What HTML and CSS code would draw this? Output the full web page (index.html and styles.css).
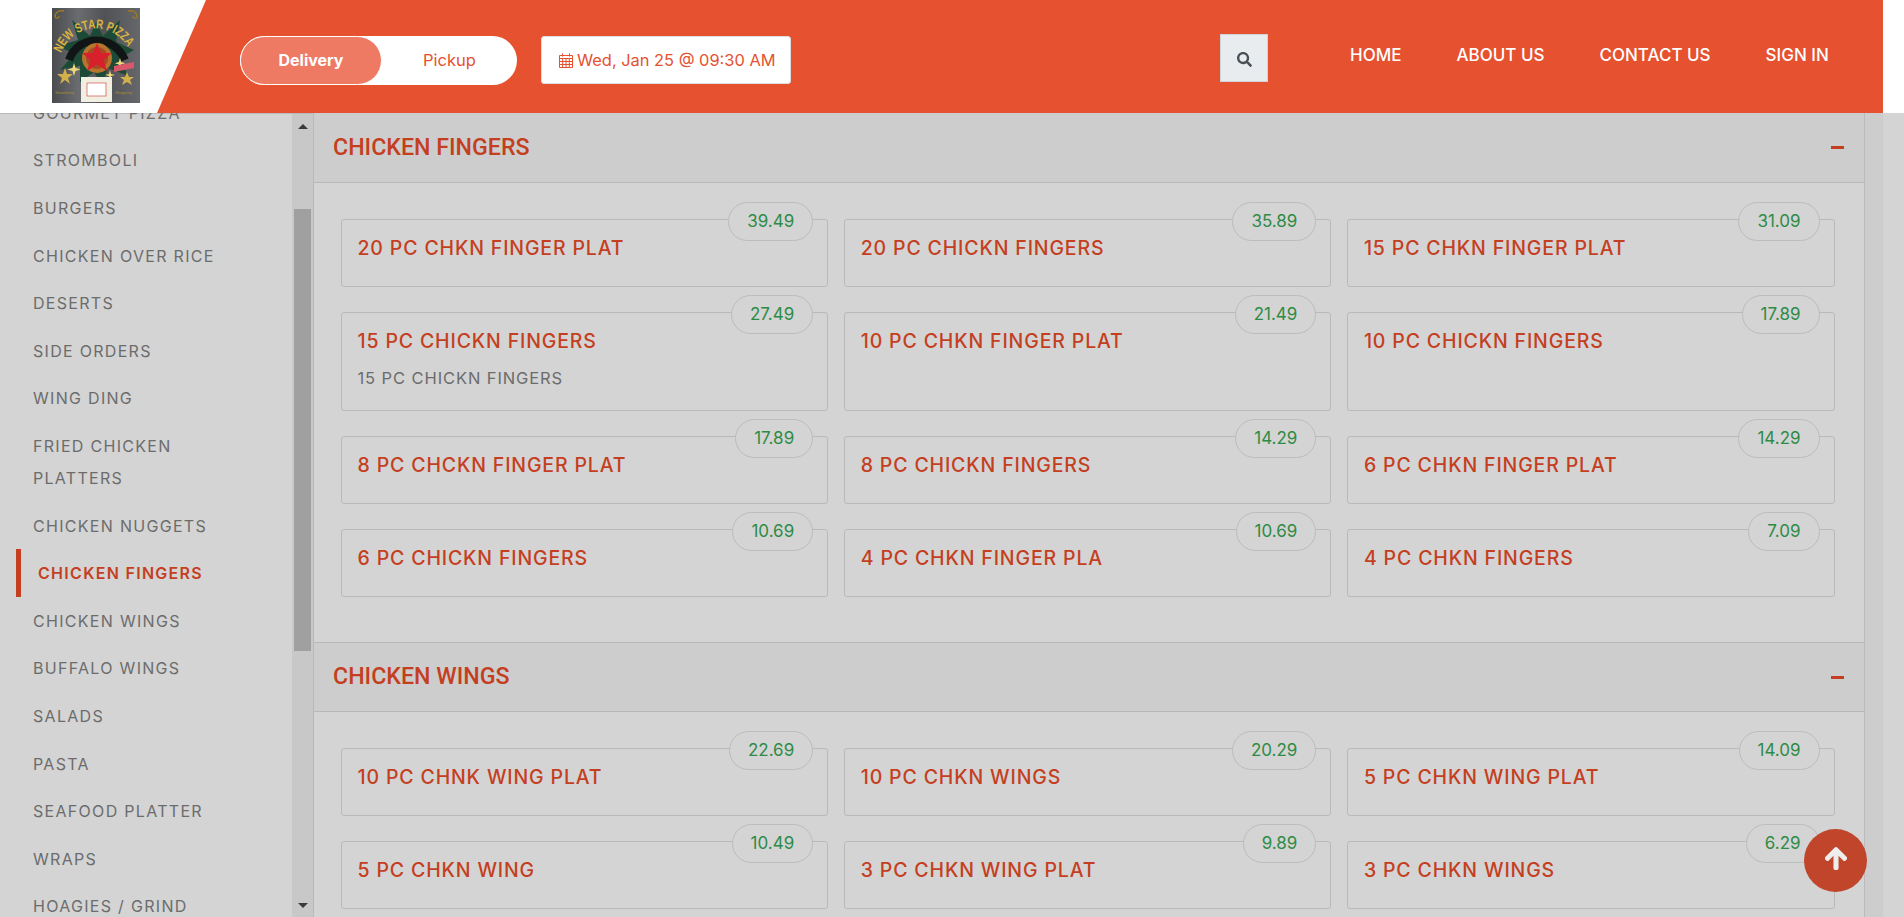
FILE: index.html
```html
<!DOCTYPE html>
<html lang="en">

<head>
  <meta charset="UTF-8">
  <title>New Star Pizza - Order Online</title>
  <link rel="stylesheet" href="styles.css">
</head>

<body>
  <header class="topbar">
    <div class="logo-box">
      <svg class="logo" viewBox="0 0 88 95">
        <defs>
          <path id="logoArc" d="M9 45 C22 12 66 12 80 47"></path>
          <linearGradient id="logoWood" x1="0" x2="1" y1="0" y2="0">
            <stop offset="0" stop-color="#4a4b4e"></stop>
            <stop offset=".3" stop-color="#6b6c70"></stop>
            <stop offset=".6" stop-color="#515256"></stop>
            <stop offset="1" stop-color="#66676b"></stop>
          </linearGradient>
        </defs>
        <rect width="88" height="95" fill="url(#logoWood)"></rect>
        <path d="M3 9c0-5 4-7 9-6M3 9c2 2 4 1 4-1M85 9c0-5-4-7-9-6M85 9c-2 2-4 1-4-1" stroke="#9c7a25" stroke-width="1.3" fill="none"></path>
        <polygon points="44,14 51,28 68,12 64,34 82,42 68,50 76,68 56,60 50,78 42,64 28,74 28,58 8,62 22,46 6,38 26,32 20,12 38,28" fill="#1d4a36"></polygon>
        <path d="M17 52 C26 26 62 26 73 52" stroke="#121516" stroke-width="8" fill="none"></path>
        <text class="logo-name"><textPath href="#logoArc" textLength="84" lengthAdjust="spacingAndGlyphs">NEW STAR PIZZA</textPath></text>
        <circle cx="45" cy="50" r="15" fill="#b8742c"></circle>
        <circle cx="45" cy="50" r="11" fill="#a94a26"></circle>
        <polygon points="45,35 49,45 60,45 51.500,52 55,63 45,56.500 35,63 38.500,52 30,45 41,45" fill="#d8202c"></polygon>
        <path d="M22 55l1.500 5 5 1.500-5 1.500-1.500 5-1.500-5-5-1.500 5-1.500zM68 50l1.200 4 4 1.200-4 1.200-1.200 4-1.200-4-4-1.200 4-1.200zM58 62l1 4 4 1-4 1-1 4-1-4-4-1 4-1z" fill="#f0d878"></path>
        <polygon points="13,60 15,66 21,66 16,70 18,76 13,72 8,76 10,70 5,66 11,66" fill="#d2b04c"></polygon>
        <polygon points="75,64 77,69 82,69 78,72 80,77 75,74 70,77 72,72 68,69 73,69" fill="#d2b04c"></polygon>
        <path d="M62 58l20-4v6l-20 4z" fill="#d8586a"></path>
        <rect x="29" y="69" width="31" height="25" fill="#f1eee2"></rect>
        <rect x="35" y="75" width="19" height="13" fill="#fff" stroke="#c33" stroke-width=".6"></rect>
        <text class="logo-small" x="3" y="86">Strawberry</text>
        <text class="logo-small" x="63" y="86">Shopping</text>
      </svg>
    </div>

    <div class="order-tools">
      <div class="mode-toggle">
        <span class="mode mode-active">Delivery</span>
        <span class="mode mode-pickup">Pickup</span>
      </div>
      <div class="date-box">
        <svg class="date-icon" viewBox="0 0 14 15">
          <path d="M3.500 0.500v3M10.500 0.500v3M0.500 2.500h13v12h-13zM0.500 5.500h13M0.500 8.500h13M0.500 11.500h13M3.700 5.500v9M7 5.500v9M10.300 5.500v9" fill="none" stroke="currentColor"></path>
        </svg>
        Wed, Jan 25 @ 09:30 AM
      </div>
    </div>

    <button class="search-btn" aria-label="Search">
      <svg viewBox="0 0 512 512">
        <path d="M505 442.7L405.3 343c-4.5-4.5-10.6-7-17-7H372c27.6-35.3 44-79.7 44-128C416 93.1 322.9 0 208 0S0 93.1 0 208s93.1 208 208 208c48.3 0 92.7-16.4 128-44v16.3c0 6.4 2.5 12.5 7 17l99.7 99.7c9.4 9.4 24.6 9.4 33.9 0l28.3-28.3c9.4-9.4 9.4-24.6.1-34zM208 336c-70.7 0-128-57.2-128-128 0-70.7 57.2-128 128-128 70.7 0 128 57.2 128 128 0 70.7-57.2 128-128 128z"></path>
      </svg>
    </button>

    <nav class="main-nav">
      <a href="#">HOME</a>
      <a href="#">ABOUT US</a>
      <a href="#">CONTACT US</a>
      <a href="#">SIGN IN</a>
    </nav>
  </header>

  <div class="page">
    <aside class="sidebar">
      <ul class="cat-list">
        <li>GOURMET PIZZA</li>
        <li>STROMBOLI</li>
        <li>BURGERS</li>
        <li>CHICKEN OVER RICE</li>
        <li>DESERTS</li>
        <li>SIDE ORDERS</li>
        <li>WING DING</li>
        <li>FRIED CHICKEN PLATTERS</li>
        <li>CHICKEN NUGGETS</li>
        <li class="cat-active">CHICKEN FINGERS</li>
        <li>CHICKEN WINGS</li>
        <li>BUFFALO WINGS</li>
        <li>SALADS</li>
        <li>PASTA</li>
        <li>SEAFOOD PLATTER</li>
        <li>WRAPS</li>
        <li>HOAGIES / GRIND</li>
      </ul>
      <div class="scrollbar">
        <span class="arrow arrow-up"></span>
        <span class="thumb"></span>
        <span class="arrow arrow-down"></span>
      </div>
    </aside>

    <main class="menu">
      <section class="menu-section">
        <div class="section-head">
          <h2>CHICKEN FINGERS</h2>
          <span class="collapse"></span>
        </div>
        <div class="item-grid">
          <div class="item"><h3>20 PC CHKN FINGER PLAT</h3><span class="price">39.49</span></div>
          <div class="item"><h3>20 PC CHICKN FINGERS</h3><span class="price">35.89</span></div>
          <div class="item"><h3>15 PC CHKN FINGER PLAT</h3><span class="price">31.09</span></div>
          <div class="item"><h3>15 PC CHICKN FINGERS</h3><p>15 PC CHICKN FINGERS</p><span class="price">27.49</span></div>
          <div class="item"><h3>10 PC CHKN FINGER PLAT</h3><span class="price">21.49</span></div>
          <div class="item"><h3>10 PC CHICKN FINGERS</h3><span class="price">17.89</span></div>
          <div class="item"><h3>8 PC CHCKN FINGER PLAT</h3><span class="price">17.89</span></div>
          <div class="item"><h3>8 PC CHICKN FINGERS</h3><span class="price">14.29</span></div>
          <div class="item"><h3>6 PC CHKN FINGER PLAT</h3><span class="price">14.29</span></div>
          <div class="item"><h3>6 PC CHICKN FINGERS</h3><span class="price">10.69</span></div>
          <div class="item"><h3>4 PC CHKN FINGER PLA</h3><span class="price">10.69</span></div>
          <div class="item"><h3>4 PC CHKN FINGERS</h3><span class="price">7.09</span></div>
        </div>
      </section>

      <section class="menu-section">
        <div class="section-head">
          <h2>CHICKEN WINGS</h2>
          <span class="collapse"></span>
        </div>
        <div class="item-grid">
          <div class="item"><h3>10 PC CHNK WING PLAT</h3><span class="price">22.69</span></div>
          <div class="item"><h3>10 PC CHKN WINGS</h3><span class="price">20.29</span></div>
          <div class="item"><h3>5 PC CHKN WING PLAT</h3><span class="price">14.09</span></div>
          <div class="item"><h3>5 PC CHKN WING</h3><span class="price">10.49</span></div>
          <div class="item"><h3>3 PC CHKN WING PLAT</h3><span class="price">9.89</span></div>
          <div class="item"><h3>3 PC CHKN WINGS</h3><span class="price">6.29</span></div>
        </div>
      </section>
    </main>
    <div class="page-gutter"></div>
  </div>

  <button class="to-top" aria-label="Back to top">
    <svg viewBox="0 0 448 512">
      <path d="M34.9 289.5l-22.2-22.2c-9.4-9.4-9.4-24.6 0-33.9L207 39c9.4-9.4 24.6-9.4 33.9 0l194.3 194.3c9.4 9.4 9.4 24.6 0 33.9L413 289.4c-9.5 9.5-25 9.3-34.3-.4L264 168.6V456c0 13.3-10.7 24-24 24h-32c-13.3 0-24-10.7-24-24V168.6L69.2 289.1c-9.3 9.8-24.8 10-34.3.4z"></path>
    </svg>
  </button>
</body>

</html>
```

FILE: styles.css
```css
* {
  box-sizing: border-box;
}

html,
body {
  height: 917px;
  margin: 0;
  overflow: hidden;
}

body {
  font-family: Inter, "Noto Sans", sans-serif;
  background-color: #d4d4d4;
}

/* top bar */
.topbar {
  display: flex;
  align-items: flex-start;
  height: 113px;
  background: linear-gradient(to right, #e6512f 1883px, #fff 1883px);
}

.logo-box {
  flex: 0 0 206px;
  height: 113px;
  padding: 8px 0 0 52px;
  background-color: #fff;
  clip-path: polygon(0 0, 100% 0, 157px 100%, 0 100%);
}

.logo {
  display: block;
  width: 88px;
  height: 95px;
}

.logo-name {
  font-family: "Liberation Sans", sans-serif;
  font-size: 13px;
  font-weight: bold;
  fill: #d9b341;
}

.logo-small {
  font-family: "Liberation Sans", sans-serif;
  font-size: 4px;
  fill: #a98d35;
}

.order-tools {
  display: flex;
  gap: 24px;
  margin: 36px 0 0 34px;
}

.mode-toggle {
  display: flex;
  width: 277px;
  height: 49px;
  background-color: #fff;
  border-radius: 25px;
}

.mode {
  flex: 1;
  font-size: 16px;
  line-height: 47px;
  text-align: center;
  color: #e6512f;
}

.mode-pickup {
  font-size: 16.5px;
  line-height: 49px;
}

.mode-active {
  flex: 0 0 142px;
  font-weight: 700;
  color: #fff;
  background-color: #ee7a64;
  border: 1px solid #fff;
  border-radius: 25px;
}

.date-box {
  display: flex;
  align-items: center;
  gap: 4px;
  width: 250px;
  height: 48px;
  padding-left: 17px;
  font-size: 16.4px;
  color: #e6512f;
  background-color: #fff;
  border: 1px solid #ddd;
  border-radius: 3px;
}

.date-icon {
  width: 14px;
  height: 15px;
}

.search-btn {
  width: 48px;
  height: 48px;
  margin: 34px 0 0 429px;
  padding: 0;
  background-color: #e9ecef;
  border: 1px solid #ced4da;
  fill: #495057;
}

.search-btn svg {
  display: block;
  width: 15px;
  height: 15px;
  margin: 2px auto 0;
}

.main-nav {
  display: flex;
  gap: 55px;
  margin: 44px 0 0 82px;
}

.main-nav a {
  font-size: 17px;
  font-weight: 500;
  line-height: 22px;
  color: #fff;
  text-decoration: none;
}

/* page below the bar */
.page {
  display: flex;
  height: 804px;
  overflow: hidden;
}

.sidebar {
  display: flex;
  flex: 0 0 314px;
  border-top: 1px solid #bbb;
  border-right: 1px solid #b9b9b9;
}

.cat-list {
  flex: 1;
  margin: -25px 0 0;
  padding: 0;
  list-style: none;
}

.cat-list li {
  padding: 7.8px 40px 7.8px 33px;
  font-size: 16px;
  line-height: 32px;
  letter-spacing: 1.3px;
  color: #6c6c6c;
}

.cat-list .cat-active {
  margin-left: 16px;
  padding-left: 17px;
  font-weight: 600;
  color: #c43f1f;
  border-left: 5px solid #c43f1f;
}

.scrollbar {
  display: flex;
  flex: 0 0 21px;
  flex-direction: column;
  background-color: #c8c8c8;
}

.thumb {
  height: 442px;
  margin: 80px 2px 0;
  background-color: #a0a0a0;
}

.arrow {
  display: block;
  width: 0;
  height: 0;
  margin: 0 auto;
  border-left: 5px solid transparent;
  border-right: 5px solid transparent;
}

.arrow-up {
  margin-top: 10px;
  border-bottom: 5px solid #3a3a3a;
}

.arrow-down {
  margin-top: 252px;
  border-top: 5px solid #3a3a3a;
}

/* menu */
.menu {
  flex: 0 0 1550px;
}

.page-gutter {
  flex: 0 0 19px;
  background-color: #cdcdcd;
  border-left: 1px solid #bbb;
}

.menu-section {
  padding-bottom: 45px;
}

.section-head {
  display: flex;
  align-items: center;
  justify-content: space-between;
  height: 70px;
  padding: 0 20px 0 19px;
  background-color: #cdcdcd;
  border-bottom: 1px solid #b8b8b8;
}

.menu-section + .menu-section .section-head {
  border-top: 1px solid #b8b8b8;
}

.section-head h2 {
  margin: 0 0 2px;
  font-family: Roboto, "Liberation Sans", sans-serif;
  font-size: 23.2px;
  font-weight: 500;
  color: #c43f1f;
}

.collapse {
  width: 13px;
  height: 3px;
  background-color: #c43f1f;
}

.item-grid {
  display: grid;
  grid-template-columns: repeat(3, 487.2px);
  gap: 25px 16px;
  padding: 36px 0 0 27px;
}

.item {
  position: relative;
  min-height: 68px;
  padding: 15px 15.5px 12px;
  border: 1px solid #b9b9b9;
  border-radius: 3px;
}

.item h3 {
  margin: 0;
  font-size: 19.5px;
  font-weight: 500;
  line-height: 26px;
  letter-spacing: 0.85px;
  color: #c43f1f;
}

.item p {
  margin: 13px 0 9px;
  font-size: 16.5px;
  line-height: 22px;
  letter-spacing: 0.9px;
  color: #6c6c6c;
}

.price {
  position: absolute;
  top: -18px;
  right: 14px;
  height: 39px;
  padding: 0 18px;
  font-size: 17px;
  line-height: 37px;
  color: #2e8b46;
  background-color: #d4d4d4;
  border: 1px solid #bcbcbc;
  border-radius: 20px;
}

.to-top {
  position: fixed;
  left: 1804px;
  top: 829px;
  width: 63px;
  height: 63px;
  padding: 0 0 4px;
  background-color: #c0452a;
  border: none;
  border-radius: 50%;
  fill: #eee;
}

.to-top svg {
  display: block;
  width: 22px;
  height: 25px;
  margin: 0 auto;
  stroke: #eee;
  stroke-width: 24;
}
```
